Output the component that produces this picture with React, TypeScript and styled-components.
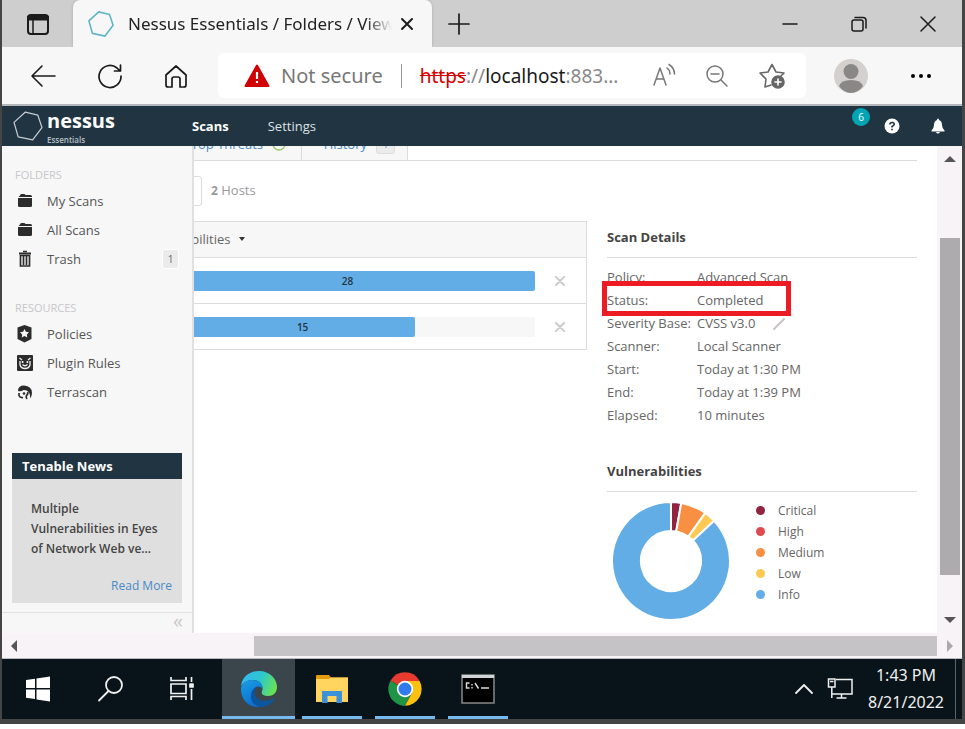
import React from "react";
import styled, { createGlobalStyle } from "styled-components";

const Global = createGlobalStyle`
  *, *::before, *::after { box-sizing: border-box; }
  html, body, #root { height: 100%; }
  body { margin: 0; background: #fff; overflow: hidden; font-family: "Open Sans", "Noto Sans", sans-serif; font-size: 13px; color: #666; }
  button { font: inherit; color: inherit; background: none; border: 0; padding: 0; cursor: pointer; }
  svg { display: block; }
  a { text-decoration: none; }
  h2, h3, p, ul, dl, dd { margin: 0; padding: 0; }
  ul { list-style: none; }
`;

const Desktop = styled.div`
  height: 100vh;
  padding-bottom: 5px;
  display: flex;
`;
const Frame = styled.div`
  flex: 1;
  min-width: 0;
  display: flex;
  flex-direction: column;
  border: solid #454545;
  border-width: 0 3px 5px 2px;
`;

/* Browser chrome */
const TabStrip = styled.div`
  height: 47px;
  flex: none;
  display: flex;
  background: #cecece;
`;
const IconButton = styled.button<{ $w: number }>`
  width: ${(p) => p.$w}px;
  flex: none;
  display: flex;
  align-items: center;
  justify-content: center;
  color: #1b1b1b;
`;
const BrowserTab = styled.div`
  width: 359px;
  display: flex;
  align-items: center;
  padding: 0 10px 0 15px;
  background: #f7f7f7;
  border-radius: 7px 7px 0 0;
  box-shadow: 0 0 3px #aaa;
`;
const TabTitle = styled.span`
  flex: 1;
  min-width: 0;
  margin-left: 14px;
  overflow: hidden;
  white-space: nowrap;
  font: 17px/24px "Noto Sans", sans-serif;
  color: #222;
  mask-image: linear-gradient(to right, #000 90%, transparent);
`;
const Spacer = styled.div`
  flex: 1;
`;
const Toolbar = styled.div`
  height: 59px;
  flex: none;
  display: flex;
  align-items: center;
  padding: 0 8px;
  background: #f7f7f7;
  border-bottom: 2px solid #b4b8ba;
`;
const AddressBar = styled.div`
  height: 45px;
  flex: 1;
  min-width: 0;
  margin: 0 8px 0 10px;
  padding: 0 7px 0 26px;
  display: flex;
  align-items: center;
  background: #fff;
  border-radius: 6px;
  font: 20px/28px "Noto Sans", sans-serif;
  color: #777;
  white-space: nowrap;
`;
const NotSecure = styled.span`
  margin-left: 11px;
  padding-right: 18px;
  border-right: 1px solid #999;
  line-height: 24px;
`;
const Url = styled.span`
  flex: 1;
  min-width: 0;
  margin-left: 18px;
  font-size: 19px;
  color: #888;
  s { color: #d40000; }
  b { font-weight: 400; color: #1a1a1a; }
`;

/* Application */
const AppHeader = styled.header`
  height: 40px;
  flex: none;
  display: flex;
  align-items: center;
  padding-left: 11px;
  background: #213441;
  color: #fff;
`;
const Brand = styled.a`
  display: flex;
  align-items: center;
  width: 179px;
  color: #fff;
`;
const BrandText = styled.span`
  display: flex;
  flex-direction: column;
  margin-left: 4px;
  font-size: 20px;
  line-height: 27px;
  font-weight: 700;
  small { font-size: 8px; line-height: 11px; font-weight: 600; color: #b8c0c6; }
`;
const HeaderLink = styled.a<{ $active?: boolean }>`
  margin-right: 39px;
  font-weight: ${(p) => (p.$active ? 700 : 400)};
  color: ${(p) => (p.$active ? "#fff" : "#dde1e4")};
`;
const NoticeCount = styled.button`
  width: 18px;
  height: 18px;
  margin-bottom: 18px;
  border-radius: 50%;
  background: #00a5b5;
  font-size: 10px;
  line-height: 18px;
`;
const Body = styled.div`
  flex: 1;
  min-height: 0;
  display: flex;
  overflow: hidden;
`;
const Sidebar = styled.nav`
  width: 192px;
  flex: none;
  display: flex;
  flex-direction: column;
  background: #f7f7f7;
  border-right: 2px solid #e0e0e0;
`;
const SideTitle = styled.h3`
  padding: 0 13px;
  margin-bottom: 3px;
  font-size: 11px;
  line-height: 16px;
  font-weight: 400;
  color: #c8c6ca;
`;
const SideGroup = styled.section`
  padding-top: 21px;
  & + & { padding-top: 27px; }
`;
const SideLink = styled.a`
  height: 29px;
  display: flex;
  align-items: center;
  gap: 13px;
  padding: 0 13px 0 14px;
  color: #555;
  svg { width: 18px; }
`;
const Count = styled.span`
  min-width: 17px;
  height: 20px;
  margin-left: auto;
  border: 1px solid #fff;
  border-radius: 3px;
  background: #ebebeb;
  font-size: 10px;
  line-height: 18px;
  text-align: center;
  color: #666;
`;
const News = styled.section`
  margin: auto 10px 9px;
  background: #dfdfdf;
`;
const NewsTitle = styled.h3`
  padding: 0 10px;
  background: #213441;
  color: #fff;
  font-size: 13px;
  line-height: 26px;
`;
const NewsBody = styled.div`
  padding: 20px 10px 6px 19px;
  font-weight: 600;
  font-size: 12px;
  line-height: 20px;
  color: #444;
  p { padding-right: 8px; }
  a { display: block; margin-top: 16px; text-align: right; font-weight: 400; line-height: 22px; color: #4a8ac6; }
`;
const Collapse = styled.button`
  height: 21px;
  flex: none;
  padding: 0 9px 4px;
  border-top: 1px solid #e0e0e0;
  text-align: right;
  font-size: 20px;
  line-height: 14px;
  color: #cdc6cc;
`;
const Viewport = styled.main`
  flex: 1;
  min-width: 0;
  overflow: hidden;
  background: #fff;
`;
/* The page is scrolled right and down inside its viewport. */
const Scrolled = styled.div`
  margin: -16px 20px 0 -121px;
`;
const PageTabs = styled.div`
  height: 31px;
  display: flex;
  border-bottom: 1px solid #dcdcdc;
`;
const PageTab = styled.a<{ $first?: boolean }>`
  width: ${(p) => (p.$first ? 229 : 106)}px;
  display: flex;
  align-items: center;
  justify-content: flex-end;
  gap: 9px;
  padding: 0 ${(p) => (p.$first ? 15 : 12)}px 2px 0;
  border-right: 1px solid #dcdcdc;
  background: #f7f7f7;
  color: #4a8ac6;
  ${Count} { margin-left: 0; width: 19px; border-color: #ddd; color: #4a8ac6; }
`;
const Filter = styled.div`
  display: flex;
  align-items: center;
  margin: 15px 0;
  color: #999;
`;
const Search = styled.input`
  width: 129px;
  height: 30px;
  margin-right: 9px;
  border: 1px solid #dcdcdc;
  border-radius: 3px;
`;
const HostCount = styled.span`
  padding-bottom: 2px;
  b { font-weight: 700; font-size: 12px; }
`;
const Columns = styled.div`
  display: grid;
  grid-template-columns: minmax(0, 1fr) 310px;
  gap: 20px;
  align-items: start;
`;
const HostTable = styled.table`
  width: 100%;
  table-layout: fixed;
  border-collapse: collapse;
  border: 1px solid #dcdcdc;
  th { height: 36px; padding: 0 0 2px; background: #f7f7f7; text-align: left; font-weight: 400; font-size: 13px; color: #666; }
  tr { border-bottom: 1px solid #dcdcdc; }
  td { height: 46px; padding: 0; text-align: center; }
  th:first-child { width: 71px; }
  th:last-child { width: 52px; }
`;
const Sort = styled.button`
  display: flex;
  align-items: center;
  gap: 8px;
`;
const Bar = styled.div`
  height: 20px;
  margin-left: 16px;
  display: flex;
  background: #f7f7f7;
  border-radius: 2px;
`;
const Segment = styled.span<{ $share: number; $color: string }>`
  width: ${(p) => p.$share}%;
  background: ${(p) => p.$color};
  border-radius: 2px;
  font-size: 10px;
  font-weight: 600;
  line-height: 20px;
  color: #213441;
`;
const Remove = styled.button`
  display: flex;
  width: 100%;
  justify-content: center;
  color: #ccc;
`;
const PanelTitle = styled.h2`
  margin-bottom: 8px;
  padding: 6px 0 10px;
  border-bottom: 1px solid #dcdcdc;
  font-size: 13px;
  line-height: 20px;
  font-weight: 700;
  color: #444;
`;
const Facts = styled.dl`
  margin-bottom: 28px;
`;
const Fact = styled.div<{ $marked?: boolean }>`
  display: grid;
  grid-template-columns: 90px auto 1fr;
  align-items: center;
  line-height: 23px;
  position: relative;
  white-space: nowrap;
  svg { margin-left: 18px; }
  &::after {
    content: ${(p) => (p.$marked ? '""' : "none")};
    position: absolute;
    top: -8px;
    bottom: -4px;
    left: -5px;
    width: 189px;
    border: 5px solid #ed1c24;
  }
`;
const ChartRow = styled.div`
  display: flex;
`;
const Legend = styled.ul`
  margin-left: 21px;
  font-size: 12px;
  line-height: 21px;
`;
const LegendItem = styled.li<{ $color: string }>`
  display: flex;
  align-items: center;
  gap: 13px;
  &::before { content: ""; width: 9px; height: 9px; border-radius: 50%; background: ${(p) => p.$color}; }
`;

/* Scroll bars */
const VTrack = styled.div`
  width: 25px;
  flex: none;
  display: flex;
  flex-direction: column;
  align-items: center;
  padding: 7px 0;
  background: #f8f3f7;
`;
const Thumb = styled.div<{ $color: string }>`
  background: ${(p) => p.$color};
`;
const VThumb = styled(Thumb)`
  flex: 1;
  width: 20px;
  margin: 73px 0 39px;
`;
const HTrack = styled.div`
  height: 26px;
  flex: none;
  display: grid;
  grid-template-columns: 24px 228px 1fr 25px;
  align-items: center;
  justify-items: center;
  background: #f8f3f7;
  border-bottom: 1px solid #bbb;
`;
const HThumb = styled(Thumb)`
  grid-column: 3;
  width: 100%;
  height: 20px;
`;
const Arrow = styled.button`
  width: 12px;
  height: 12px;
`;

/* Task bar */
const TaskBar = styled.footer`
  height: 60px;
  flex: none;
  display: flex;
  background: #081419;
  color: #f0f0f0;
`;
const TaskButton = styled.button<{ $state?: "open" | "active" }>`
  width: 73px;
  flex: none;
  display: flex;
  align-items: center;
  justify-content: center;
  background: ${(p) => (p.$state === "active" ? "#3b464c" : "none")};
  position: relative;
  &::after {
    content: ${(p) => (p.$state ? '""' : "none")};
    position: absolute;
    bottom: 0;
    left: ${(p) => (p.$state === "active" ? 0 : 7)}px;
    right: ${(p) => (p.$state === "active" ? 0 : 6)}px;
    height: 3px;
    background: #76b9ed;
  }
`;
const StartButton = styled(TaskButton)`
  width: 72px;
`;
const Launchers = styled.div`
  display: flex;
  flex: 1;
  & > :nth-child(4) { margin-left: 4px; }
`;
const Tray = styled.div`
  display: flex;
  align-items: center;
  gap: 13px;
`;
const Clock = styled.time`
  width: 80px;
  margin-right: 9px;
  text-align: center;
  white-space: nowrap;
  font: 16px/27px "Noto Sans", sans-serif;
`;
const ShowDesktop = styled.button`
  width: 7px;
  border-left: 1px solid #59636a;
`;

type Stroke = { w?: number; h?: number; box?: string; sw?: number; color?: string; children: React.ReactNode };
const Line = ({ w = 24, h = w, box = `0 0 ${w} ${h}`, sw = 2, color = "currentColor", children }: Stroke) => (
  <svg width={w} height={h} viewBox={box} fill="none" stroke={color} strokeWidth={sw} strokeLinecap="round" strokeLinejoin="round" aria-hidden="true">
    {children}
  </svg>
);

const heptagon = "M12 1 L24 4 L28 16 L19 28 L5 25 L1 11 Z";

const Folder = () => (
  <svg width="18" height="16" viewBox="0 0 18 16" fill="#2c2c2c" aria-hidden="true">
    <path d="M4 2.500 Q4 1 5.500 1 H8 Q9 1 9.500 2 H14.500 Q16 2 16 3.500 V4 H2.500 Z" />
    <path d="M2 5 H16 V12.500 Q16 14 14.500 14 H3.500 Q2 14 2 12.500 Z" />
  </svg>
);
const Trash = () => (
  <svg width="18" height="18" viewBox="0 0 18 18" fill="none" stroke="#2c2c2c" aria-hidden="true">
    <path d="M3 3.500 H15" strokeWidth="2" />
    <path d="M7 1.500 H11" strokeWidth="1.500" />
    <path d="M4.500 5.500 H13.500 V16 H4.500 Z M7.500 6 V15 M10.500 6 V15" strokeWidth="1.700" />
  </svg>
);
const Shield = () => (
  <svg width="18" height="18" viewBox="0 0 18 18" aria-hidden="true">
    <path d="M8.500 0 L15.500 2.500 V14 L8.500 17.500 L1.500 14 V2.500 Z" fill="#2c2c2c" />
    <path d="M8.500 4 L9.900 6.800 L13 7.200 L10.800 9.400 L11.300 12.500 L8.500 11 L5.700 12.500 L6.200 9.400 L4 7.200 L7.100 6.800 Z" fill="#f7f7f7" />
  </svg>
);
const Plugin = () => (
  <svg width="18" height="18" viewBox="0 0 18 18" aria-hidden="true">
    <rect x="1" y="1" width="16" height="16" rx="1" fill="#2c2c2c" />
    <path d="M3.500 4 L6 6 M14.500 4 L12 6 M4 7 V11 Q5 14.500 9 14.500 Q13 14.500 14 11 V7 M6.500 10.500 Q9 13 11.500 10.500" fill="none" stroke="#f0f0f0" strokeWidth="1.300" />
    <circle cx="6.600" cy="8" r="1" fill="#fff" />
    <circle cx="11.400" cy="8" r="1" fill="#fff" />
  </svg>
);
const Terrascan = () => (
  <svg width="18" height="16" viewBox="0 0 18 16" aria-hidden="true">
    <path d="M2 7 Q2 1.500 8 1.500 Q16 2 16 9 Q16 12 14 14.500 Q14.500 9 11.500 7 Q10 6 7.500 6 Q5 8 2 7 Z" fill="#2c2c2c" />
    <path d="M3 9 V11.500 Q4 14 7 13.500 M11.500 8 Q12.500 10 10.500 11.500 Q9.500 13 11 15" fill="none" stroke="#2c2c2c" strokeWidth="1.700" />
    <circle cx="8" cy="9.500" r="1.300" fill="#2c2c2c" />
  </svg>
);

const facts: { label: string; value: string; marked?: boolean; editable?: boolean }[] = [
  { label: "Policy:", value: "Advanced Scan" },
  { label: "Status:", value: "Completed", marked: true },
  { label: "Severity Base:", value: "CVSS v3.0", editable: true },
  { label: "Scanner:", value: "Local Scanner" },
  { label: "Start:", value: "Today at 1:30 PM" },
  { label: "End:", value: "Today at 1:39 PM" },
  { label: "Elapsed:", value: "10 minutes" },
];

const severities = [
  { name: "Critical", color: "#91243e", from: 0, to: 10 },
  { name: "High", color: "#dd4b50", from: 0, to: 0 },
  { name: "Medium", color: "#f88f42", from: 10, to: 35.5 },
  { name: "Low", color: "#fdc953", from: 35.5, to: 47 },
  { name: "Info", color: "#63ade6", from: 47, to: 360 },
];

const point = (r: number, deg: number) => {
  const a = (deg * Math.PI) / 180;
  return `${(59 + r * Math.sin(a)).toFixed(2)} ${(59 - r * Math.cos(a)).toFixed(2)}`;
};
const slice = (from: number, to: number) => {
  const large = to - from > 180 ? 1 : 0;
  return `M${point(59, from)} A59 59 0 ${large} 1 ${point(59, to)} L${point(30, to)} A30 30 0 ${large} 0 ${point(30, from)} Z`;
};

const Donut = () => (
  <svg width="128" height="124" viewBox="-5 -2 128 124" role="img" aria-label="Vulnerabilities by severity">
    {severities.filter((s) => s.to > s.from).map((s) => (
      <path key={s.name} d={slice(s.from, s.to)} fill={s.color} stroke="#fff" strokeWidth="2" />
    ))}
  </svg>
);

const hosts = [
  { count: 28, lead: 0, share: 100 },
  { count: 15, lead: 8, share: 60 },
];

const Triangle = ({ d, color = "#555" }: { d: string; color?: string }) => (
  <svg width="12" height="12" viewBox="0 0 12 12" fill={color} aria-hidden="true"><path d={d} /></svg>
);

export default function App() {
  return (
    <Desktop>
      <Global />
      <Frame>
        <TabStrip>
          <IconButton $w={71} aria-label="Tab actions">
            <Line w={22} sw={2}>
              <rect x="1" y="2" width="20" height="19" rx="3" />
              <path d="M2 5 H20" strokeWidth="5" />
              <path d="M6 6 V20" strokeWidth="1.500" />
            </Line>
          </IconButton>
          <BrowserTab>
            <Line w={26} box="0 0 29 29" sw={1.8} color="#62b5c5"><path d={heptagon} /></Line>
            <TabTitle>Nessus Essentials / Folders / View</TabTitle>
            <IconButton $w={30} aria-label="Close tab">
              <Line w={14} sw={2}><path d="M2 2 L12 12 M12 2 L2 12" /></Line>
            </IconButton>
          </BrowserTab>
          <IconButton $w={53} aria-label="New tab">
            <Line w={22} sw={1.7}><path d="M11 1 V21 M1 11 H21" /></Line>
          </IconButton>
          <Spacer />
          <IconButton $w={69} aria-label="Minimize">
            <Line w={16} sw={1.5}><path d="M1 8 H15" /></Line>
          </IconButton>
          <IconButton $w={69} aria-label="Restore">
            <Line w={16} sw={1.5}>
              <rect x="1" y="4" width="11" height="11" rx="2" />
              <path d="M4 1.500 H12 Q15 1.500 15 4.500 V12" />
            </Line>
          </IconButton>
          <IconButton $w={69} aria-label="Close window">
            <Line w={16} sw={1.5}><path d="M1 1 L15 15 M15 1 L1 15" /></Line>
          </IconButton>
        </TabStrip>

        <Toolbar>
          <IconButton $w={66} aria-label="Back">
            <Line w={26} sw={1.6}><path d="M25 13 H2 M12 3 L2 13 L12 23" /></Line>
          </IconButton>
          <IconButton $w={67} aria-label="Refresh">
            <Line w={26} sw={1.7}><path d="M24 13 A11 11 0 1 1 20 5 L23 8 M23.500 2 V8 H17.500" /></Line>
          </IconButton>
          <IconButton $w={65} aria-label="Home">
            <Line w={24} sw={1.7}><path d="M2 11 L12 2 L22 11 V21 Q22 23 20 23 H16 V15 Q16 13 14 13 H10 Q8 13 8 15 V23 H4 Q2 23 2 21 Z" /></Line>
          </IconButton>
          <AddressBar>
            <svg width="26" height="24" viewBox="0 0 26 24" aria-hidden="true">
              <path d="M13 1.500 L24.500 22 H1.500 Z" fill="#d10000" stroke="#d10000" strokeWidth="2" strokeLinejoin="round" />
              <path d="M13 8 V15 M13 17 V19" stroke="#fff" strokeWidth="2.200" />
            </svg>
            <NotSecure>Not secure</NotSecure>
            <Url><s>https</s>://<b>localhost</b>:883...</Url>
            <IconButton $w={53} aria-label="Read aloud">
              <Line w={26} sw={1.5} color="#777"><path d="M3 22 L9 5 L15 22 M5 16 H13 M16 5 Q19 7 19 11 M18 1.500 Q23.500 5 23.500 11" /></Line>
            </IconButton>
            <IconButton $w={54} aria-label="Zoom out">
              <Line w={24} sw={1.5} color="#777"><circle cx="10" cy="10" r="8" /><path d="M16 16 L22 22 M6 10 H14" /></Line>
            </IconButton>
            <IconButton $w={55} aria-label="Add to favorites">
              <Line w={26} sw={1.6} color="#666">
                <path d="M12 22 L6 24 L7 16 L1 10 L9 9 L13 1.500 L17 9 L25 10 L22 13" />
                <circle cx="19" cy="19" r="6" fill="#666" />
                <path d="M19 16 V22 M16 19 H22" stroke="#fff" />
              </Line>
            </IconButton>
          </AddressBar>
          <IconButton $w={74} aria-label="Profile">
            <svg width="34" height="34" viewBox="0 0 34 34" aria-hidden="true">
              <circle cx="17" cy="17" r="17" fill="#d4d0cd" />
              <circle cx="17" cy="12.500" r="7.500" fill="#8a8886" />
              <path d="M5 27 Q7 21 17 21 Q27 21 29 27 Q24 34 17 34 Q10 34 5 27 Z" fill="#8a8886" />
            </svg>
          </IconButton>
          <IconButton $w={66} aria-label="Settings and more">
            <svg width="22" height="6" viewBox="0 0 22 6" aria-hidden="true"><circle cx="3" cy="3" r="2" /><circle cx="11" cy="3" r="2" /><circle cx="19" cy="3" r="2" /></svg>
          </IconButton>
        </Toolbar>

        <AppHeader>
          <Brand href="#" aria-label="Nessus Essentials">
            <Line w={30} box="0 0 29 29" sw={1.2} color="#c5ccd1"><path d={heptagon} /></Line>
            <BrandText>nessus<small>Essentials</small></BrandText>
          </Brand>
          <HeaderLink href="#" $active>Scans</HeaderLink>
          <HeaderLink href="#">Settings</HeaderLink>
          <Spacer />
          <NoticeCount aria-label="6 notices">6</NoticeCount>
          <IconButton $w={44} aria-label="Help">
            <svg width="16" height="16" viewBox="0 0 16 16" aria-hidden="true">
              <circle cx="8" cy="8" r="7.500" fill="#fff" />
              <path d="M5.800 6.500 Q6 4.500 8 4.500 Q10.200 4.500 10.200 6.300 Q10.200 7.300 8 8.500 V9.500 M8 10.800 V12.300" stroke="#213441" strokeWidth="1.600" fill="none" />
            </svg>
          </IconButton>
          <IconButton $w={48} aria-label="Notifications">
            <svg width="16" height="16" viewBox="0 0 16 16" fill="#fff" aria-hidden="true">
              <path d="M8 0.500 Q9 0.500 9 2 Q12 3 12 7 Q12 10 14.500 12.500 V13.500 H1.500 V12.500 Q4 10 4 7 Q4 3 7 2 Q7 0.500 8 0.500 Z M6 14 H10 Q9.500 15.500 8 15.500 Q6.500 15.500 6 14 Z" />
            </svg>
          </IconButton>
        </AppHeader>

        <Body>
          <Sidebar>
            <SideGroup>
              <SideTitle>FOLDERS</SideTitle>
              <SideLink href="#"><Folder />My Scans</SideLink>
              <SideLink href="#"><Folder />All Scans</SideLink>
              <SideLink href="#"><Trash />Trash<Count>1</Count></SideLink>
            </SideGroup>
            <SideGroup>
              <SideTitle>RESOURCES</SideTitle>
              <SideLink href="#"><Shield />Policies</SideLink>
              <SideLink href="#"><Plugin />Plugin Rules</SideLink>
              <SideLink href="#"><Terrascan />Terrascan</SideLink>
            </SideGroup>
            <News>
              <NewsTitle>Tenable News</NewsTitle>
              <NewsBody>
                <p>Multiple Vulnerabilities in Eyes of Network Web ve...</p>
                <a href="#">Read More</a>
              </NewsBody>
            </News>
            <Collapse aria-label="Collapse sidebar">«</Collapse>
          </Sidebar>

          <Viewport>
            <Scrolled>
              <PageTabs>
                <PageTab href="#" $first>
                  Top Threats
                  <Line w={14} sw={1.3} color="#9cc66b"><circle cx="7" cy="7" r="6" /></Line>
                </PageTab>
                <PageTab href="#">History<Count>1</Count></PageTab>
              </PageTabs>
              <Filter>
                <Search aria-label="Search hosts" />
                <HostCount><b>2</b> Hosts</HostCount>
              </Filter>
              <Columns>
                <HostTable>
                  <thead>
                    <tr>
                      <th />
                      <th>
                        <Sort>
                          Vulnerabilities
                          <svg width="6" height="4" viewBox="0 0 6 4" fill="#333" aria-hidden="true"><path d="M0 0 H6 L3 4 Z" /></svg>
                        </Sort>
                      </th>
                      <th />
                    </tr>
                  </thead>
                  <tbody>
                    {hosts.map((h) => (
                      <tr key={h.count}>
                        <td />
                        <td>
                          <Bar>
                            <Segment $share={h.lead} $color="#f88f42" />
                            <Segment $share={h.share} $color="#63ade6">{h.count}</Segment>
                          </Bar>
                        </td>
                        <td>
                          <Remove aria-label="Remove host">
                            <Line w={10} sw={2}><path d="M1 1 L9 9 M9 1 L1 9" /></Line>
                          </Remove>
                        </td>
                      </tr>
                    ))}
                  </tbody>
                </HostTable>
                <aside>
                  <PanelTitle>Scan Details</PanelTitle>
                  <Facts>
                    {facts.map((f) => (
                      <Fact key={f.label} $marked={f.marked}>
                        <dt>{f.label}</dt>
                        <dd>{f.value}</dd>
                        {f.editable && (
                          <Line w={12} sw={2} color="#c8c4c8"><path d="M1 11 L11 1" /></Line>
                        )}
                      </Fact>
                    ))}
                  </Facts>
                  <PanelTitle>Vulnerabilities</PanelTitle>
                  <ChartRow>
                    <Donut />
                    <Legend>
                      {severities.map((s) => (
                        <LegendItem key={s.name} $color={s.color}>{s.name}</LegendItem>
                      ))}
                    </Legend>
                  </ChartRow>
                </aside>
              </Columns>
            </Scrolled>
          </Viewport>

          <VTrack>
            <Arrow aria-label="Scroll up"><Triangle d="M0 9 L6 3 L12 9 Z" /></Arrow>
            <VThumb $color="#adabad" />
            <Arrow aria-label="Scroll down"><Triangle d="M0 3 L6 9 L12 3 Z" /></Arrow>
          </VTrack>
        </Body>

        <HTrack>
          <Arrow aria-label="Scroll left"><Triangle d="M9 0 L3 6 L9 12 Z" /></Arrow>
          <HThumb $color="#c5c3c5" />
          <Arrow aria-label="Scroll right"><Triangle d="M3 0 L9 6 L3 12 Z" color="#aaa" /></Arrow>
        </HTrack>

        <TaskBar>
          <Launchers>
            <StartButton aria-label="Start">
              <svg width="26" height="26" viewBox="0 0 26 26" fill="#fff" aria-hidden="true">
                <path d="M1 4 L10 2.700 V12 H1 Z M11.500 2.500 L25 0.500 V12 H11.500 Z M1 13.500 H10 V23 L1 21.700 Z M11.500 13.500 H25 V25.500 L11.500 23.500 Z" />
              </svg>
            </StartButton>
            <StartButton aria-label="Search">
              <Line w={26} sw={1.8}><circle cx="17" cy="9" r="8" /><path d="M11.500 15 L2 24.500" /></Line>
            </StartButton>
            <StartButton aria-label="Task view">
              <Line w={26} sw={1.7}>
                <path d="M2 1 V4.500 H17 V1 M2 24 V20.500 H17 V24 M2 8 H17 V17.500 H2 Z M22.500 1 V6 M22.500 13 V24" strokeLinecap="butt" strokeLinejoin="miter" />
                <rect x="21" y="8" width="3" height="3" fill="currentColor" />
              </Line>
            </StartButton>
            <TaskButton $state="active" aria-label="Microsoft Edge">
              <svg width="38" height="38" viewBox="0 0 38 38" aria-hidden="true">
                <defs>
                  <linearGradient id="edgeTop" x1="0" y1="0.300" x2="1" y2="0.600">
                    <stop offset="0" stopColor="#35b8f1" /><stop offset="0.500" stopColor="#2cc6cf" /><stop offset="1" stopColor="#6be34e" />
                  </linearGradient>
                  <linearGradient id="edgeLeft" x1="0" y1="0" x2="0.500" y2="1">
                    <stop offset="0" stopColor="#1b9de2" /><stop offset="1" stopColor="#0a6fd3" />
                  </linearGradient>
                </defs>
                <path d="M1 16 C2 7 9 1 19 1 C30 1 37 9 37 17 C37 23 33 26 28 26 C23 26 21 24 22 21 C24 17 21 10 13 10 C7 10 3 13 1 16 Z" fill="url(#edgeTop)" />
                <path d="M1 18 C2 13 7 9.500 13 10 C20 10.500 23 15 22.500 19 C21 15.500 15 15 13 21 C11 28 17 35 24 35.500 C21 37 17 37.200 14 36.500 C6 34.500 0.500 27 1 18 Z" fill="url(#edgeLeft)" />
                <path d="M18 16.500 C13 20 13 27 20 30 C25 32 30 30.500 33 28.500 C34 28 34.500 29 34 29.700 C31 34 26 37 21 37 C14 36 10 31 11 25 C11.500 20 14 17 18 16.500 Z" fill="#0c559f" />
              </svg>
            </TaskButton>
            <TaskButton $state="open" aria-label="File Explorer">
              <svg width="34" height="30" viewBox="0 0 34 30" aria-hidden="true">
                <path d="M1 2 Q1 1 2 1 H14 L16 3.500 H33 V28 H1 Z" fill="#e39b0c" />
                <path d="M1 5 H14 L16 3.500 H33 V28 H1 Z" fill="#ffd45f" />
                <path d="M7 17 H27 V29 H21.500 V22 H12.500 V29 H7 Z" fill="#3b92d8" />
              </svg>
            </TaskButton>
            <TaskButton $state="open" aria-label="Google Chrome">
              <svg width="34" height="34" viewBox="0 0 34 34" aria-hidden="true">
                <path d="M17 17 L2.500 8.700 A16.700 16.700 0 0 1 31.500 8.700 Z" fill="#e63b2e" />
                <path d="M17 17 L2.500 8.700 A16.700 16.700 0 0 0 17 33.700 L24 21 Z" fill="#1f9447" />
                <path d="M17 9 H31.600 A16.700 16.700 0 0 1 17 33.700 L24 21 Z" fill="#fcc010" />
                <circle cx="17" cy="17" r="8.200" fill="#fff" />
                <circle cx="17" cy="17" r="6.500" fill="#2f7bee" />
              </svg>
            </TaskButton>
            <TaskButton $state="open" aria-label="Command Prompt">
              <svg width="34" height="30" viewBox="0 0 34 30" aria-hidden="true">
                <rect x="1" y="1" width="32" height="28" fill="#000" stroke="#888" strokeWidth="1.500" />
                <rect x="1" y="1" width="32" height="3" fill="#d0d4d6" />
                <path d="M8.500 9 H5.500 V14 H8.500 M11 10 V11.500 M11 13 V14.500 M14 9 L17.500 14.500 M20 14 H28" stroke="#ddd" strokeWidth="1.400" fill="none" />
              </svg>
            </TaskButton>
          </Launchers>
          <Tray>
            <Line w={20} sw={1.8}><path d="M2 14 L10 6 L18 14" /></Line>
            <Line w={26} sw={1.5}>
              <path d="M9 3.500 H25 V18 H5 M1.500 3 H8 V11 H1.500 Z M3 5.500 H6.500 M4.800 11 V22 M14.500 18 V22 M9.500 22 H19.500" strokeLinecap="butt" strokeLinejoin="miter" />
            </Line>
            <Clock>1:43 PM<br />8/21/2022</Clock>
          </Tray>
          <ShowDesktop aria-label="Show desktop" />
        </TaskBar>
      </Frame>
    </Desktop>
  );
}
